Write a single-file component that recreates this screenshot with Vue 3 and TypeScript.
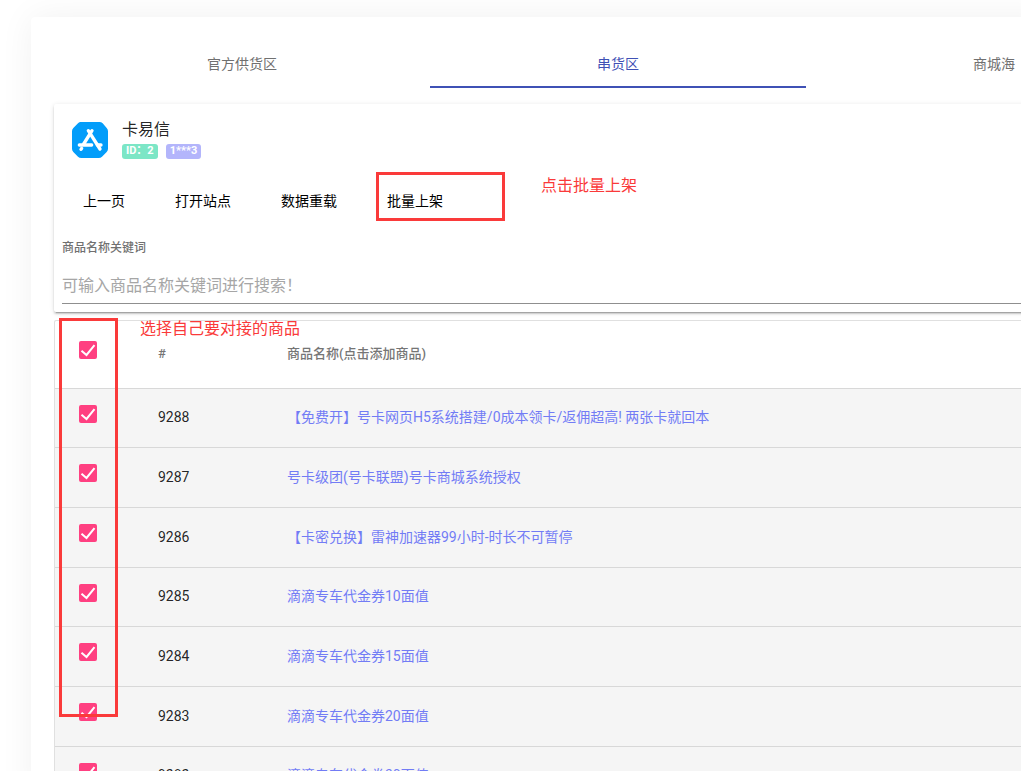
<script setup lang="ts">
import { computed, ref } from 'vue'

interface Product {
  id: number
  name: string
  checked: boolean
}

const tabs = ['官方供货区', '串货区', '商城海']
const activeTab = ref(1)
const keyword = ref('')

const products = ref<Product[]>([
  { id: 9288, name: '【免费开】号卡网页H5系统搭建/0成本领卡/返佣超高! 两张卡就回本', checked: true },
  { id: 9287, name: '号卡级团(号卡联盟)号卡商城系统授权', checked: true },
  { id: 9286, name: '【卡密兑换】雷神加速器99小时-时长不可暂停', checked: true },
  { id: 9285, name: '滴滴专车代金券10面值', checked: true },
  { id: 9284, name: '滴滴专车代金券15面值', checked: true },
  { id: 9283, name: '滴滴专车代金券20面值', checked: true },
  { id: 9282, name: '滴滴专车代金券30面值', checked: true },
])

const allChecked = computed({
  get: () => products.value.every((p) => p.checked),
  set: (value: boolean) => products.value.forEach((p) => (p.checked = value)),
})
</script>

<template>
  <main class="panel">
    <nav class="tabs" role="tablist">
      <button
        v-for="(tab, i) in tabs"
        :key="tab"
        type="button"
        role="tab"
        class="tab"
        :class="{ active: i === activeTab }"
        :aria-selected="i === activeTab"
        @click="activeTab = i"
      >
        {{ tab }}
      </button>
    </nav>

    <section class="card site">
      <header class="site-head">
        <svg class="logo" viewBox="0 0 108 108" aria-hidden="true">
          <path d="M26 0H82Q88 0 92 4L104 18Q108 22 108 28V80Q108 86 104 90L90 104Q86 108 80 108H28Q22 108 18 104L4 90Q0 86 0 80V28Q0 22 4 18L18 4Q22 0 26 0Z" fill="#039dfa" />
          <g fill="none" stroke="#fff" stroke-width="10" stroke-linecap="round" stroke-linejoin="round">
            <path d="M49 26L84 81" />
            <path d="M60 26L35 66" />
            <path d="M22 69H59M76 69H87" />
            <path d="M29 79L27 82" />
          </g>
        </svg>
        <div class="site-info">
          <h1 class="site-name">卡易信</h1>
          <div class="badges">
            <span class="badge green">ID：2</span>
            <span class="badge violet">1***3</span>
          </div>
        </div>
      </header>

      <div class="actions">
        <button type="button" class="action">上一页</button>
        <button type="button" class="action">打开站点</button>
        <button type="button" class="action">数据重载</button>
        <button type="button" class="action">
          批量上架
          <span class="mark mark-action"></span>
          <span class="note note-action">点击批量上架</span>
        </button>
      </div>

      <div class="field">
        <label for="keyword">商品名称关键词</label>
        <input id="keyword" v-model="keyword" type="text" placeholder="可输入商品名称关键词进行搜索！" />
      </div>
    </section>

    <section class="card list">
      <table>
        <colgroup>
          <col class="col-check" />
          <col class="col-id" />
          <col />
        </colgroup>
        <thead>
          <tr>
            <th>
              <label class="check">
                <input v-model="allChecked" type="checkbox" aria-label="全选" />
                <svg viewBox="0 0 18 18" aria-hidden="true"><path d="M2.5 9.8L7.5 14L15.5 4.2" /></svg>
              </label>
            </th>
            <th>#</th>
            <th>商品名称(点击添加商品)</th>
          </tr>
        </thead>
        <tbody>
          <tr v-for="p in products" :key="p.id">
            <td>
              <label class="check">
                <input v-model="p.checked" type="checkbox" :aria-label="p.name" />
                <svg viewBox="0 0 18 18" aria-hidden="true"><path d="M2.5 9.8L7.5 14L15.5 4.2" /></svg>
              </label>
            </td>
            <td>{{ p.id }}</td>
            <td><a href="#">{{ p.name }}</a></td>
          </tr>
        </tbody>
      </table>
      <span class="mark mark-list"></span>
      <span class="note note-list">选择自己要对接的商品</span>
    </section>
  </main>
</template>

<style>
html,
body {
  height: 100%;
  overflow: hidden;
  background: #fff;
}
</style>

<style scoped>
.panel {
  box-sizing: border-box;
  margin: 17px -40px 0 31px;
  padding: 23px 0 0 23px;
  border-radius: 4px;
  background: #fff;
  box-shadow: 0 0 35px rgba(0, 0, 0, 0.06);
  font-family: Roboto, 'Noto Sans CJK SC', sans-serif;
  font-size: 14px;
  line-height: 20px;
  color: rgba(0, 0, 0, 0.87);
}

button {
  border: 0;
  background: none;
  font: inherit;
  cursor: pointer;
}

.tabs {
  display: flex;
  overflow: hidden;
}

.tab {
  box-sizing: border-box;
  flex: 0 0 376px;
  height: 48px;
  padding: 2px 0 0;
  border-bottom: 2px solid transparent;
  color: #707070;
}

.tab.active {
  border-bottom-color: #3f51b5;
  color: #3f51b5;
}

.card {
  position: relative;
  border-radius: 2px;
  background: #fff;
  box-shadow:
    0 3px 1px -2px rgba(0, 0, 0, 0.2),
    0 2px 2px 0 rgba(0, 0, 0, 0.14),
    0 1px 5px 0 rgba(0, 0, 0, 0.12);
}

.site {
  margin-top: 16px;
  padding: 16px 0 8px;
}

.site-head {
  display: flex;
  gap: 14px;
  padding-left: 18px;
}

.logo {
  width: 36px;
  height: 36px;
  margin-top: 2px;
}

.site-name {
  margin: 0;
  font-size: 16px;
  font-weight: 400;
  line-height: 20px;
}

.badges {
  display: flex;
  gap: 8px;
  margin-top: 4px;
}

.badge {
  height: 15px;
  padding: 0 4px;
  border-radius: 3px;
  color: #fff;
  font-size: 11px;
  font-weight: 700;
  line-height: 13px;
}

.green {
  background: #7ce6c6;
}

.violet {
  background: #b3b5fb;
}

.actions {
  display: flex;
  margin-top: 24px;
  padding-left: 4px;
}

.action {
  position: relative;
  height: 36px;
  padding: 0 25px;
  color: #000;
  white-space: nowrap;
}

.field {
  display: flex;
  flex-direction: column;
  margin-top: 18px;
  padding-left: 8px;
}

.field label {
  color: #707070;
  font-size: 12px;
  font-weight: 500;
  line-height: 22px;
}

.field input {
  height: 36px;
  margin-top: 8px;
  padding: 0;
  border: 0;
  border-bottom: 1px solid #8f8f8f;
  border-radius: 0;
  outline: 0;
  background: none;
  color: inherit;
  font: inherit;
  font-size: 16px;
}

.field input::placeholder {
  color: #a6a6a6;
  opacity: 1;
}

.list {
  margin-top: 8px;
  border: 1px solid #e0e0e0;
  border-right: 0;
  box-shadow: none;
}

table {
  width: 100%;
  border-collapse: separate;
  border-spacing: 0;
  table-layout: fixed;
}

.col-check {
  width: 75px;
}

.col-id {
  width: 129px;
}

th,
td {
  box-sizing: border-box;
  height: 60px;
  padding: 0 0 2px 28px;
  border-bottom: 1px solid #d8d8d8;
  text-align: left;
  vertical-align: middle;
  white-space: nowrap;
}

th {
  height: 68px;
  color: #757575;
  font-size: 13px;
  font-weight: 500;
}

th:first-child,
td:first-child {
  padding: 0 0 9px 24px;
}

tbody tr {
  background: #f5f5f5;
}

tbody tr:nth-child(3n + 1) td {
  height: 59px;
}

td a {
  color: #727cf5;
  text-decoration: none;
}

.check {
  display: grid;
  width: 18px;
  height: 18px;
}

.check input,
.check svg {
  grid-area: 1 / 1;
  width: 18px;
  height: 18px;
  margin: 0;
}

.check input {
  box-sizing: border-box;
  border: 2px solid #757575;
  border-radius: 2px;
  appearance: none;
}

.check input:checked {
  border-color: #ff4081;
  background: #ff4081;
}

.check svg {
  fill: none;
  stroke: #fff;
  stroke-width: 2;
  pointer-events: none;
}

.mark {
  position: absolute;
  box-sizing: border-box;
  border: 3px solid #fa3a3a;
  pointer-events: none;
}

.note {
  position: absolute;
  color: #fa3a3a;
  font-size: 16px;
  line-height: 20px;
  white-space: nowrap;
}

.mark-action {
  top: -11px;
  left: 14px;
  width: 129px;
  height: 49px;
}

.note-action {
  top: -7px;
  left: 179px;
}

.mark-list {
  top: -3px;
  left: 4px;
  width: 59px;
  height: 399px;
}

.note-list {
  top: -2px;
  left: 85px;
}
</style>
